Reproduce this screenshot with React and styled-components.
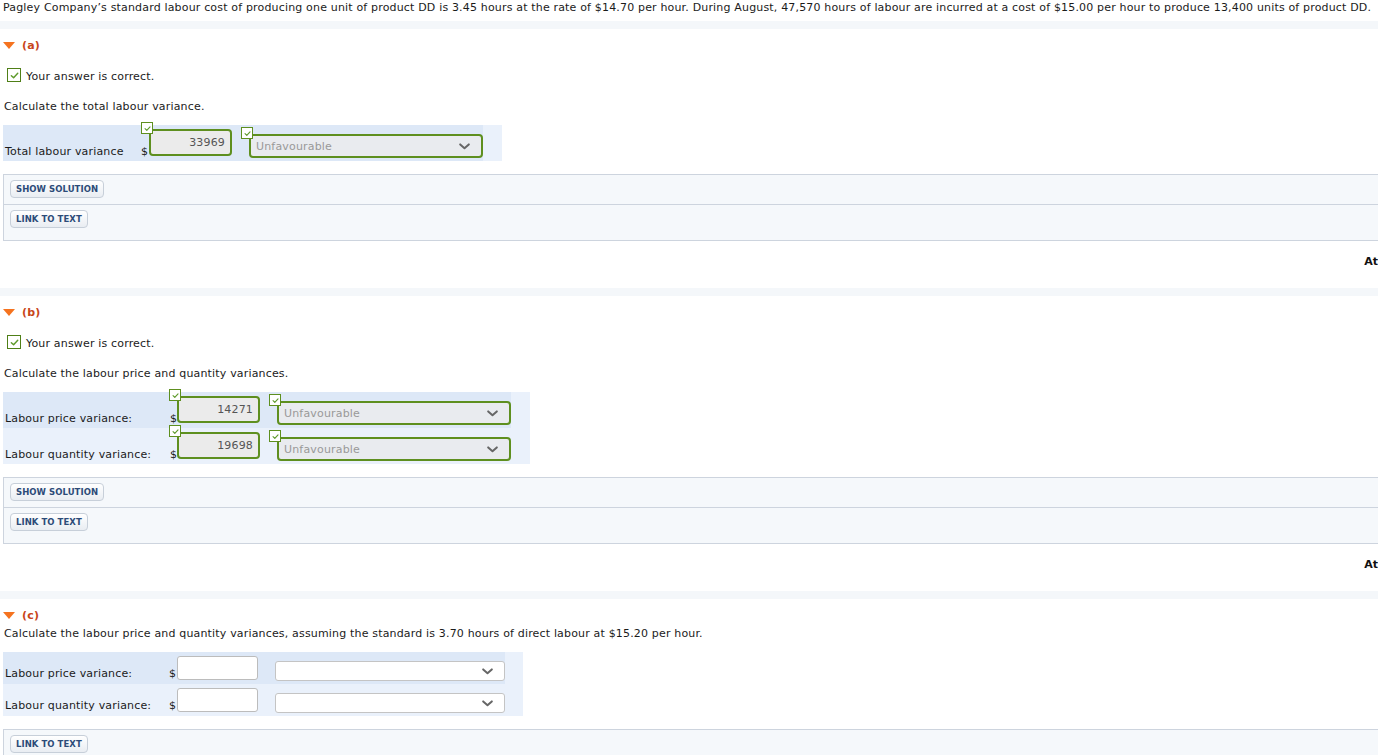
import React from 'react';
import styled, { createGlobalStyle } from 'styled-components';

const GlobalStyle = createGlobalStyle`
    html, body {
        margin: 0;
        padding: 0;
        background: #fff;
        overflow: hidden;
    }
    body {
        font-family: "DejaVu Sans", Verdana, sans-serif;
        font-size: 11px;
        letter-spacing: 0.17px;
        color: #1b1b1b;
    }
`

const Page = styled.div`
    width: 1378px;
`

const Intro = styled.div`
    padding: 1px 0 0 3px;
    line-height: 13px;
    white-space: nowrap;
`

const Band = styled.div`
    height: 8px;
    margin-top: ${p => p.$top}px;
    background: #f4f7fa;
`

const Part = styled.div`
    padding-left: 3px;
`

const PartHeader = styled.div`
    display: flex;
    align-items: center;
    gap: 7px;
    height: 13px;
    margin-top: 10px;
`

const Triangle = styled.span`
    width: 0;
    height: 0;
    border-left: 6.5px solid transparent;
    border-right: 6.5px solid transparent;
    border-top: 7px solid #f5731f;
`

const PartTitle = styled.span`
    font-weight: bold;
    color: #c8461a;
    line-height: 13px;
`

const Correct = styled.div`
    display: flex;
    align-items: center;
    gap: 5px;
    margin-top: 16px;
    padding-left: 4px;
    height: 14px;
    line-height: 13px;
    span + span {
        padding-top: 2px;
    }
`

const CheckBox = styled.span`
    box-sizing: border-box;
    width: 14px;
    height: 14px;
    border: 1.5px solid #4f7f17;
    background: #fff;
    display: flex;
    align-items: center;
    justify-content: center;
`

const Question = styled.div`
    margin-top: ${p => p.$top}px;
    line-height: 13px;
    padding-left: 1px;
`

const AnswerTable = styled.div`
    display: inline-flex;
    flex-direction: column;
    margin-top: ${p => p.$top}px;
    padding-right: ${p => p.$pad}px;
    background: #eaf1fb;
`

const AnswerRow = styled.div`
    display: flex;
    align-items: flex-end;
    height: ${p => p.$h}px;
    background: ${p => (p.$shade ? '#dde8f7' : '#eaf1fb')};
`

const RowLabel = styled.div`
    box-sizing: border-box;
    width: ${p => p.$w}px;
    padding-left: 2px;
    line-height: 13px;
    margin-bottom: ${p => p.$mb}px;
    white-space: nowrap;
`

const Dollar = styled.div`
    width: ${p => p.$w}px;
    line-height: 13px;
    margin-bottom: ${p => p.$mb}px;
`

const Cell = styled.div`
    position: relative;
    margin-bottom: ${p => p.$mb}px;
    margin-right: ${p => p.$gap || 0}px;
`

const Badge = styled.span`
    position: absolute;
    left: -8px;
    top: -7px;
    box-sizing: border-box;
    width: 12px;
    height: 12px;
    border: 1px solid #5e8f1f;
    background: #fff;
    display: flex;
    align-items: center;
    justify-content: center;
`

const NumInput = styled.input`
    box-sizing: border-box;
    display: block;
    width: ${p => p.$w}px;
    height: ${p => p.$h}px;
    padding: 0 5px;
    margin: 0;
    font-family: inherit;
    font-size: 11px;
    letter-spacing: 0.17px;
    text-align: right;
    color: #555;
    outline: none;
    border-radius: ${p => (p.$graded ? 4 : 3)}px;
    border: ${p => (p.$graded ? '2px solid #5e8f1f' : '1px solid #bcbcbc')};
    background: ${p => (p.$graded ? '#ebebeb' : '#fff')};
`

const SelectBox = styled.div`
    box-sizing: border-box;
    display: flex;
    align-items: center;
    justify-content: space-between;
    width: ${p => p.$w}px;
    height: ${p => p.$h}px;
    padding: 0 11px 0 5px;
    border-radius: ${p => (p.$graded ? 4 : 3)}px;
    border: ${p => (p.$graded ? '2px solid #5e8f1f' : '1px solid #c4c4c4')};
    background: ${p => (p.$graded ? '#e9ebef' : '#fff')};
    color: #999;
    line-height: 13px;
`

const SolutionBox = styled.div`
    margin-top: 13px;
    margin-right: -2px;
    border: 1px solid #cdd4de;
    background: #f5f8fb;
`

const SolutionSection = styled.div`
    height: ${p => p.$h}px;
    box-sizing: border-box;
    padding: 5px 0 0 6px;
    & + & {
        border-top: 1px solid #cdd4de;
    }
`

const Btn = styled.button`
    box-sizing: border-box;
    height: 18px;
    margin: 0;
    padding: 0 5px;
    font-family: "DejaVu Sans", Verdana, sans-serif;
    font-size: 8.5px;
    font-weight: bold;
    letter-spacing: 0.05px;
    color: #2c4b78;
    border: 1px solid #c7cfd9;
    border-radius: 4px;
    background: linear-gradient(#ffffff, #e9edf2);
    cursor: pointer;
`

const Attempts = styled.div`
    display: flex;
    justify-content: flex-end;
    margin-top: 13px;
    padding-top: 1px;
    height: 13px;
    line-height: 13px;
    font-weight: bold;
    letter-spacing: 0;
    color: #111;
`

function Tick({ size = 8 }) {
    return (
        <svg width={size} height={size} viewBox="0 0 10 10">
            <path d="M1.5 5.2 L4 7.6 L8.6 2.6" fill="none" stroke="#5e9a2b" strokeWidth="1.6" strokeLinecap="round" strokeLinejoin="round" />
        </svg>
    )
}

function Chevron() {
    return (
        <svg width="11" height="7" viewBox="0 0 11 7">
            <path d="M1.2 1.4 L5.5 5.2 L9.8 1.4" fill="none" stroke="#666" strokeWidth="2" strokeLinecap="round" strokeLinejoin="round" />
        </svg>
    )
}

function GradedRow({ label, value, labelW, dollarW, shade }) {
    return (
        <AnswerRow $h={36} $shade={shade}>
            <RowLabel $w={labelW} $mb={3}>{label}</RowLabel>
            <Dollar $w={dollarW} $mb={3}>$</Dollar>
            <Cell $mb={5} $gap={17}>
                <NumInput $graded $w={83} $h={27} value={value} readOnly />
                <Badge><Tick size={7} /></Badge>
            </Cell>
            <Cell $mb={3}>
                <SelectBox $graded $w={234} $h={24}>
                    <span>Unfavourable</span>
                    <Chevron />
                </SelectBox>
                <Badge><Tick size={7} /></Badge>
            </Cell>
        </AnswerRow>
    )
}

function EmptyRow({ label, shade }) {
    return (
        <AnswerRow $h={32} $shade={shade}>
            <RowLabel $w={166} $mb={4}>{label}</RowLabel>
            <Dollar $w={8} $mb={4}>$</Dollar>
            <Cell $mb={4} $gap={17}>
                <NumInput $w={81} $h={24} defaultValue="" />
            </Cell>
            <Cell $mb={3}>
                <SelectBox $w={230} $h={20}>
                    <span></span>
                    <Chevron />
                </SelectBox>
            </Cell>
        </AnswerRow>
    )
}

function Solution({ showSolution }) {
    return (
        <SolutionBox>
            {showSolution && (
                <SolutionSection $h={29}>
                    <Btn>SHOW SOLUTION</Btn>
                </SolutionSection>
            )}
            <SolutionSection $h={showSolution ? 36 : 40}>
                <Btn>LINK TO TEXT</Btn>
            </SolutionSection>
        </SolutionBox>
    )
}

function CorrectNote() {
    return (
        <Correct>
            <CheckBox><Tick size={9} /></CheckBox>
            <span>Your answer is correct.</span>
        </Correct>
    )
}

export default function App() {
    return (
        <Page>
            <GlobalStyle />
            <Intro>
                Pagley Company’s standard labour cost of producing one unit of product DD is 3.45 hours at the rate of $14.70 per hour. During August, 47,570 hours of labour are incurred at a cost of $15.00 per hour to produce 13,400 units of product DD.
            </Intro>

            <Band $top={7} />
            <Part>
                <PartHeader><Triangle /><PartTitle>(a)</PartTitle></PartHeader>
                <CorrectNote />
                <Question $top={18}>Calculate the total labour variance.</Question>
                <AnswerTable $top={12} $pad={19}>
                    <GradedRow label="Total labour variance" value="33969" labelW={138} dollarW={8} shade />
                </AnswerTable>
                <Solution showSolution />
                <Attempts>At</Attempts>
            </Part>

            <Band $top={20} />
            <Part>
                <PartHeader><Triangle /><PartTitle>(b)</PartTitle></PartHeader>
                <CorrectNote />
                <Question $top={18}>Calculate the labour price and quantity variances.</Question>
                <AnswerTable $top={12} $pad={19}>
                    <GradedRow label="Labour price variance:" value="14271" labelW={167} dollarW={7} shade />
                    <GradedRow label="Labour quantity variance:" value="19698" labelW={167} dollarW={7} />
                </AnswerTable>
                <Solution showSolution />
                <Attempts>At</Attempts>
            </Part>

            <Band $top={20} />
            <Part>
                <PartHeader><Triangle /><PartTitle>(c)</PartTitle></PartHeader>
                <Question $top={5}>Calculate the labour price and quantity variances, assuming the standard is 3.70 hours of direct labour at $15.20 per hour.</Question>
                <AnswerTable $top={12} $pad={18}>
                    <EmptyRow label="Labour price variance:" shade />
                    <EmptyRow label="Labour quantity variance:" />
                </AnswerTable>
                <Solution />
            </Part>
        </Page>
    )
}
